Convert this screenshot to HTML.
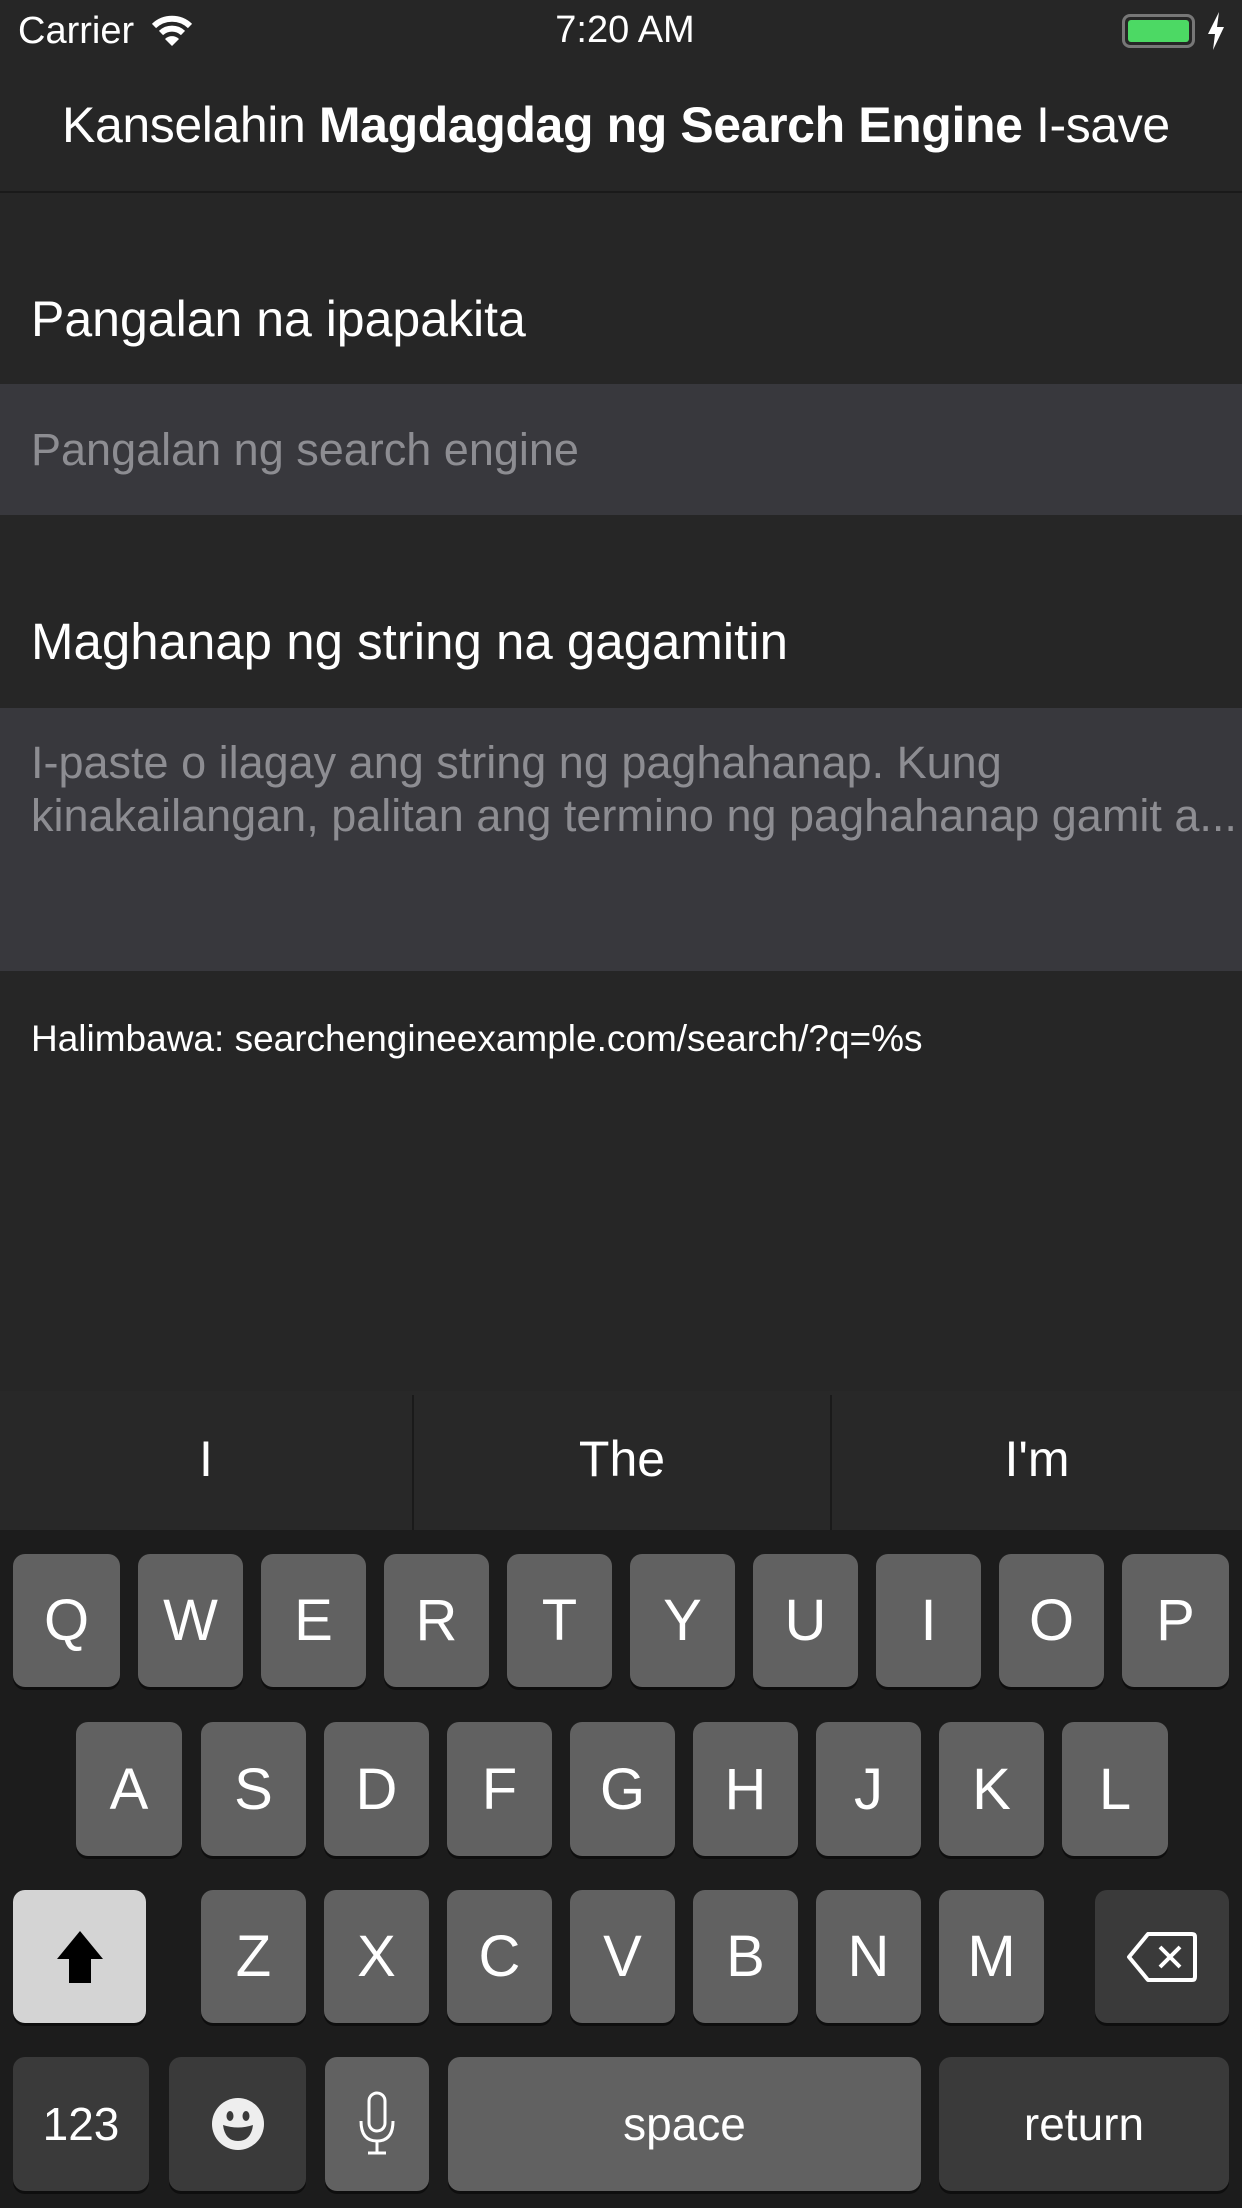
<!DOCTYPE html>
<html><head><meta charset="utf-8"><style>
*{margin:0;padding:0;box-sizing:border-box}
body{width:1242px;height:2208px;background:#262626;font-family:"Liberation Sans",sans-serif;color:#fff;position:relative;overflow:hidden}
.a{position:absolute;white-space:nowrap}
.k{position:absolute;background:#616161;border-radius:12px;box-shadow:0 3px 0 #0e0e0e;color:#fff;font-size:58px;display:flex;align-items:center;justify-content:center}
.d{background:#3a3a3a}
</style></head><body>
<div class="a" style="left:18px;top:10px;font-size:38px">Carrier</div>
<svg class="a" style="left:150px;top:14px" width="44" height="34" viewBox="0 0 44 34"><path d="M4 12 A26 26 0 0 1 40 12" stroke="#fff" stroke-width="6" fill="none"/><path d="M11 19 A16 16 0 0 1 33 19" stroke="#fff" stroke-width="6" fill="none"/><path d="M22 32 L15 25 A10 10 0 0 1 29 25 Z" fill="#fff"/></svg>
<div class="a" style="left:0;width:1250px;text-align:center;top:9px;font-size:38px">7:20 AM</div>
<div class="a" style="left:1122px;top:14px;width:73px;height:34px;border:3px solid #777;border-radius:8px;padding:3px"><div style="background:#4cd964;width:100%;height:100%;border-radius:3px"></div></div>
<svg class="a" style="left:1206px;top:12px" width="20" height="38" viewBox="0 0 20 38"><path d="M13 0 L2 22 H9 L7 38 L18 15 H11 Z" fill="#fff"/></svg>
<div class="a" style="left:62px;top:96px;font-size:50px;letter-spacing:-0.4px">Kanselahin <b>Magdagdag ng Search Engine</b> I-save</div>
<div class="a" style="left:0;top:191px;width:1242px;height:2px;background:#1a1a1a"></div>
<div class="a" style="left:31px;top:290px;font-size:50px">Pangalan na ipapakita</div>
<div class="a" style="left:0;top:384px;width:1242px;height:131px;background:#38383d"></div>
<div class="a" style="left:31px;top:424px;font-size:45px;color:#8d8d92">Pangalan ng search engine</div>
<div class="a" style="left:31px;top:612px;font-size:51px">Maghanap ng string na gagamitin</div>
<div class="a" style="left:0;top:708px;width:1242px;height:263px;background:#38383d"></div>
<div class="a" style="left:31px;top:736px;font-size:45px;color:#8d8d92;line-height:53px">I-paste o ilagay ang string ng paghahanap. Kung<br>kinakailangan, palitan ang termino ng paghahanap gamit a...</div>
<div class="a" style="left:31px;top:1018px;font-size:37px">Halimbawa: searchengineexample.com/search/?q=%s</div>
<div class="a" style="left:0;top:1391px;width:1242px;height:139px;background:#282828"></div>
<div class="a" style="left:412px;top:1395px;width:2px;height:135px;background:#1a1a1a"></div>
<div class="a" style="left:830px;top:1395px;width:2px;height:135px;background:#1a1a1a"></div>
<div class="a" style="left:0;width:412px;text-align:center;top:1430px;font-size:50px">I</div>
<div class="a" style="left:414px;width:416px;text-align:center;top:1430px;font-size:50px">The</div>
<div class="a" style="left:832px;width:410px;text-align:center;top:1430px;font-size:50px">I'm</div>
<div class="a" style="left:0;top:1530px;width:1242px;height:678px;background:#1c1c1c"></div>
<div class="k" style="left:13px;top:1554px;width:107px;height:133px">Q</div>
<div class="k" style="left:138px;top:1554px;width:105px;height:133px">W</div>
<div class="k" style="left:261px;top:1554px;width:105px;height:133px">E</div>
<div class="k" style="left:384px;top:1554px;width:105px;height:133px">R</div>
<div class="k" style="left:507px;top:1554px;width:105px;height:133px">T</div>
<div class="k" style="left:630px;top:1554px;width:105px;height:133px">Y</div>
<div class="k" style="left:753px;top:1554px;width:105px;height:133px">U</div>
<div class="k" style="left:876px;top:1554px;width:105px;height:133px">I</div>
<div class="k" style="left:999px;top:1554px;width:105px;height:133px">O</div>
<div class="k" style="left:1122px;top:1554px;width:107px;height:133px">P</div>
<div class="k" style="left:76px;top:1722px;width:106px;height:134px">A</div>
<div class="k" style="left:201px;top:1722px;width:105px;height:134px">S</div>
<div class="k" style="left:324px;top:1722px;width:105px;height:134px">D</div>
<div class="k" style="left:447px;top:1722px;width:105px;height:134px">F</div>
<div class="k" style="left:570px;top:1722px;width:105px;height:134px">G</div>
<div class="k" style="left:693px;top:1722px;width:105px;height:134px">H</div>
<div class="k" style="left:816px;top:1722px;width:105px;height:134px">J</div>
<div class="k" style="left:939px;top:1722px;width:105px;height:134px">K</div>
<div class="k" style="left:1062px;top:1722px;width:106px;height:134px">L</div>
<div class="k" style="left:13px;top:1890px;width:133px;height:133px;background:#d4d4d4"><svg width="54" height="60" viewBox="0 0 54 60"><path d="M27 4 L50 32 H38 V56 H16 V32 H4 Z" fill="#000"/></svg></div>
<div class="k" style="left:201px;top:1890px;width:105px;height:133px">Z</div>
<div class="k" style="left:324px;top:1890px;width:105px;height:133px">X</div>
<div class="k" style="left:447px;top:1890px;width:105px;height:133px">C</div>
<div class="k" style="left:570px;top:1890px;width:105px;height:133px">V</div>
<div class="k" style="left:693px;top:1890px;width:105px;height:133px">B</div>
<div class="k" style="left:816px;top:1890px;width:105px;height:133px">N</div>
<div class="k" style="left:939px;top:1890px;width:105px;height:133px">M</div>
<div class="k d" style="left:1095px;top:1890px;width:134px;height:133px"><svg width="72" height="52" viewBox="0 0 72 52"><path d="M22 3 H66 Q69 3 69 6 V46 Q69 49 66 49 H22 L3 26 Z" fill="none" stroke="#fff" stroke-width="4" stroke-linejoin="round"/><path d="M34 16 L54 36 M54 16 L34 36" stroke="#fff" stroke-width="4"/></svg></div>
<div class="k d" style="left:13px;top:2057px;width:136px;height:134px;font-size:46px">123</div>
<div class="k d" style="left:169px;top:2057px;width:137px;height:134px"><svg width="54" height="54" viewBox="0 0 54 54"><circle cx="27" cy="27" r="26" fill="#eee"/><ellipse cx="19" cy="19" rx="3.5" ry="5" fill="#3a3a3a"/><ellipse cx="35" cy="19" rx="3.5" ry="5" fill="#3a3a3a"/><path d="M12 28 Q27 33 42 28 Q40 44 27 44 Q14 44 12 28Z" fill="#3a3a3a"/></svg></div>
<div class="k" style="left:325px;top:2057px;width:104px;height:134px"><svg width="40" height="66" viewBox="0 0 40 66"><rect x="12" y="2" width="16" height="38" rx="8" fill="none" stroke="#fff" stroke-width="3"/><path d="M4 30 Q4 50 20 50 Q36 50 36 30 M20 50 V62 M11 62 H29" fill="none" stroke="#fff" stroke-width="3"/></svg></div>
<div class="k" style="left:448px;top:2057px;width:473px;height:134px;font-size:46px">space</div>
<div class="k d" style="left:939px;top:2057px;width:290px;height:134px;font-size:46px">return</div>
</body></html>
